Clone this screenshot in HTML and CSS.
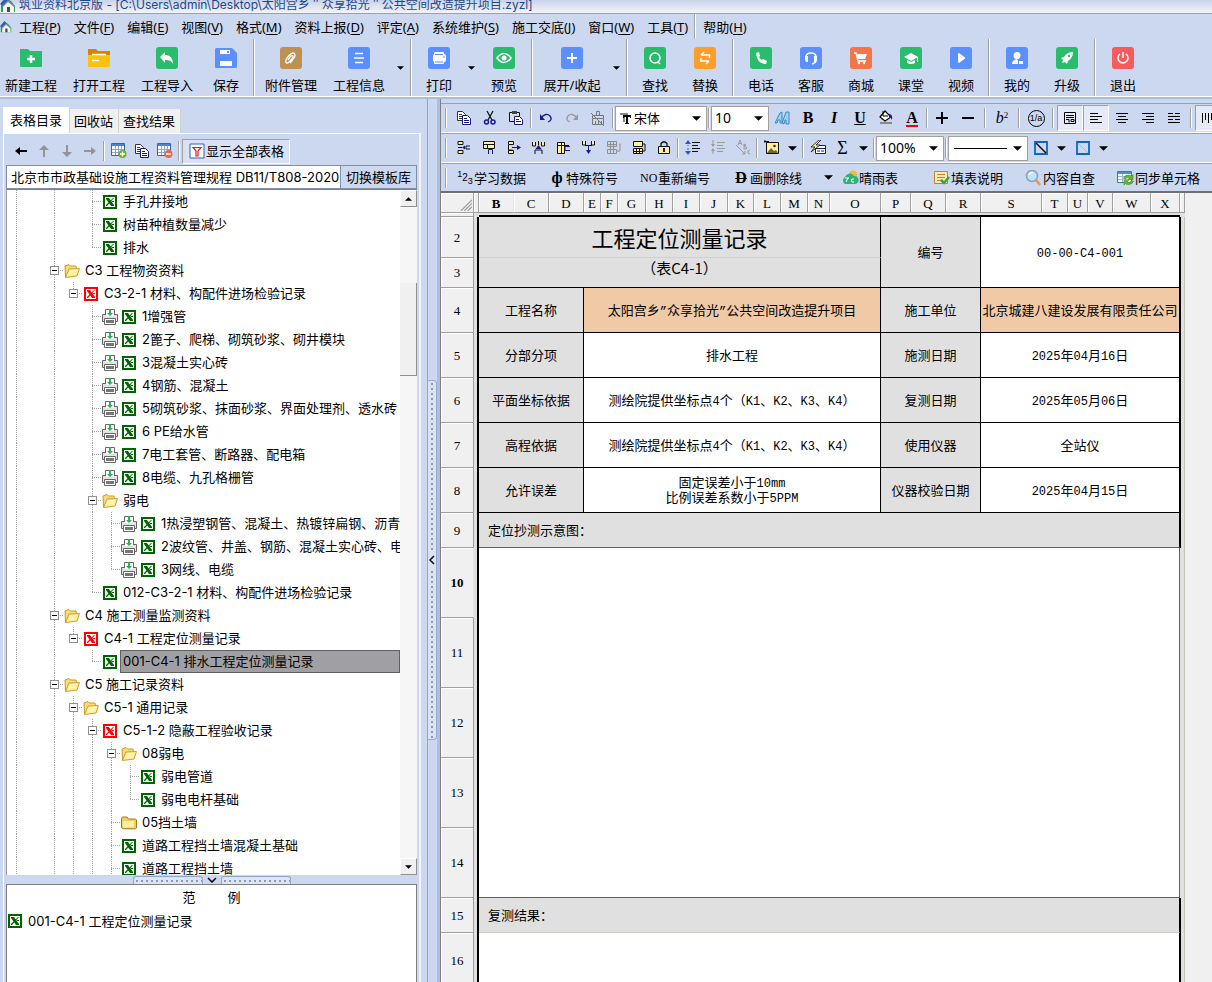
FILE: index.html
```html
<!DOCTYPE html>
<html lang="zh-CN">
<head>
<meta charset="utf-8">
<title>筑业资料北京版</title>
<link rel="stylesheet" href="styles.css">
</head>
<body>
<svg class="defs" aria-hidden="true">
  <symbol id="logo" viewBox="0 0 16 16"><path d="M1 8 7 2l4 2 4 5v6H1z" fill="#2f9b57"/><path d="M0 7 6 0l3 3-6 6z" fill="#2c5fb0"/><path d="M3 9l5-5 6 5v6H3z" fill="#f4f4ee"/><path d="M2 9l6-6 7 6-1 1-6-5-5 5z" fill="#7a8aa0"/><path d="M7 10h3v5H7z" fill="#4a4a4a"/></symbol>
  <symbol id="xls" viewBox="0 0 14 14"><path d="M0 0h14v14H0z" fill="currentColor"/><path d="M2 2h10v10H2z" fill="#fff"/><path d="M3 3h3l5 7v1H8L3 4z" fill="currentColor"/><path d="M10 3h1L4 11H3v-1z" fill="currentColor"/><path d="M9 6h2v1H9z" fill="currentColor"/></symbol>
  <symbol id="prn" viewBox="0 0 16 16"><path d="M3.500 5.500v-5h9v5" fill="#fff" stroke="#666"/><path d="M.5 5.500h15v7h-15z" fill="#e4e4e4" stroke="#666"/><path d="M2.500 9.500h11v6h-11z" fill="#fff" stroke="#666"/><path d="M4 11h8v3H4z" fill="#777"/><path d="M4 5h8v2H4z" fill="#fff"/><path d="M7 0h2v4h2L8 7 5 4h2z" fill="#2fae55"/></symbol>
  <symbol id="fo" viewBox="0 0 16 16"><path d="M1.500 14 1 3l4-1.500L6.500 3H12l.5 2.500" fill="#f7dc7a" stroke="#c99a2a"/><path d="M1.500 14.500 5 6l10.500-.5L13 13z" fill="#fff09a" stroke="#cf9f2c"/><path d="M6 8l7-.5M5 11l6-.5" stroke="#fffbd6"/></symbol>
  <symbol id="fc" viewBox="0 0 16 16"><path d="M.5 12.500v-9l1-1.500H6l1.500 2h7l1 1v8l-1 .8H2z" fill="#f2cf5c" stroke="#9b7a2e"/><path d="M2 6h11v6.500H2z" fill="#fff0a0"/></symbol>
  <symbol id="tbl" viewBox="0 0 16 16"><path d="M.5.5h13v12H.5z" fill="#fff" stroke="#2f66b3"/><path d="M1 1h12v2H1z" fill="#4d86cf"/><path d="M1 6.500h12M1 9.500h12M4.500 3v9M7.500 3v9M10.500 3v9" stroke="#8aa8cf"/></symbol>
  <symbol id="cp" viewBox="0 0 16 16"><path d="M1.500 1.500h5l3 3v6h-8z" fill="#fff" stroke="#333"/><path d="M3 4.500h3M3 6.500h4M3 8.500h4" stroke="#333"/><path d="M6.500 5.500h5l3 3v6h-8z" fill="#fff" stroke="#1a1a70"/><path d="M8 8.500h3M8 10.500h5M8 12.500h5" stroke="#1a1a70"/></symbol>
  <symbol id="down" viewBox="0 0 8 4"><path d="M0 0h8L4 4z" fill="#000"/></symbol>
</svg>

<header class="title"><svg class="s16"><use href="#logo"/></svg><span>筑业资料北京版 - [C:\Users\admin\Desktop\太阳宫乡＂众享拾光＂公共空间改造提升项目.zyzl]</span></header>

<nav class="menu">
  <svg class="logo2"><use href="#logo"/></svg>
  <button>工程(<u>P</u>)</button><button>文件(<u>F</u>)</button><button>编辑(<u>E</u>)</button><button>视图(<u>V</u>)</button><button>格式(<u>M</u>)</button><button>资料上报(<u>D</u>)</button><button>评定(<u>A</u>)</button><button>系统维护(<u>S</u>)</button><button>施工交底(<u>J</u>)</button><button>窗口(<u>W</u>)</button><button>工具(<u>T</u>)</button><span class="msep"></span><button>帮助(<u>H</u>)</button>
</nav>

<div class="tools">
  <button class="w4"><svg class="s22" viewBox="0 0 22 22"><path d="M0 2h8l2 2h12v15a1 1 0 0 1-1 1H1a1 1 0 0 1-1-1z" fill="#2abc6c"/><path d="M11 8v8M7 12h8" stroke="#fff" stroke-width="2.500"/></svg>新建工程</button>
  <button class="w4"><svg class="s22" viewBox="0 0 22 22"><path d="M0 2h8l2 2h12v5H0z" fill="#d98200"/><path d="M0 8h22v11a1 1 0 0 1-1 1H1a1 1 0 0 1-1-1z" fill="#fcc20c"/><path d="M4 7.500h14M4 13.500h7" stroke="#fff" stroke-width="1.500"/></svg>打开工程</button>
  <button class="w4"><svg class="s22" viewBox="0 0 22 22"><rect width="22" height="22" rx="3" fill="#2abc6c"/><path d="M4 10l5-5v3c5 0 8 3 8 9-1-3-4-4-8-4v3z" fill="#fff"/></svg>工程导入</button>
  <button class="w2"><svg class="s22" viewBox="0 0 22 22"><path d="M1 1h16l5 5v14a1 1 0 0 1-1 1H1a1 1 0 0 1-1-1V2z" fill="#5b8ffb"/><path d="M5 3h10v4H5zM5 14h12v5H5z" fill="#fff"/><path d="M12 4h2v2h-2z" fill="#5b8ffb"/></svg>保存</button>
  <span class="tsep"></span>
  <button class="w4"><svg class="s22" viewBox="0 0 22 22"><rect width="22" height="22" rx="3" fill="#bd9153"/><path d="M8 13c2-4 4-5 5-4s-2 4-4 6-4 1-3-2 5-7 7-7 3 2 1 5-3 4-4 5" fill="none" stroke="#fff" stroke-width="1.300"/></svg>附件管理</button>
  <button class="w4"><svg class="s22" viewBox="0 0 22 22"><rect width="22" height="22" rx="3" fill="#5b8ffb"/><path d="M7 6.500h8M6 11h10M7 15.500h8" stroke="#fff" stroke-width="1.300"/></svg>工程信息</button>
  <button class="arr" aria-label="工程信息选项"><svg><use href="#down"/></svg></button>
  <span class="tsep"></span>
  <button class="w2"><svg class="s22" viewBox="0 0 22 22"><rect width="22" height="22" rx="3" fill="#5b8ffb"/><rect x="6" y="5" width="10" height="12" rx="1" fill="#fff"/><rect x="5" y="7" width="13" height="8" rx="2" fill="#fff"/><path d="M7 7.500h8M7 15h8M15 10h2" stroke="#5b8ffb"/></svg>打印</button>
  <button class="arr" aria-label="打印选项"><svg><use href="#down"/></svg></button>
  <button class="w2"><svg class="s22" viewBox="0 0 22 22"><rect width="22" height="22" rx="3" fill="#2abc6c"/><path d="M4 11q7-9 14 0-7 9-14 0z" fill="none" stroke="#fff" stroke-width="1.600"/><circle cx="11" cy="11" r="2.500" fill="#fff"/></svg>预览</button>
  <span class="tsep"></span>
  <button class="w5"><svg class="s22" viewBox="0 0 22 22"><rect width="22" height="22" rx="3" fill="#5b8ffb"/><path d="M11 6v10M6 11h10" stroke="#fff" stroke-width="1.800"/></svg>展开/收起</button>
  <button class="arr" aria-label="展开选项"><svg><use href="#down"/></svg></button>
  <span class="tsep"></span>
  <button class="w2"><svg class="s22" viewBox="0 0 22 22"><rect width="22" height="22" rx="3" fill="#2abc6c"/><circle cx="11" cy="11" r="5" fill="none" stroke="#fff" stroke-width="1.500"/><path d="M14 15l2 2" stroke="#fff" stroke-width="1.500"/></svg>查找</button>
  <button class="w2"><svg class="s22" viewBox="0 0 22 22"><rect width="22" height="22" rx="3" fill="#fd9e2b"/><path d="M16 8H7M10 5L7 8M6 14h9M12 17l3-3M7 14v-3M15.500 8v3" fill="none" stroke="#fff" stroke-width="1.600"/></svg>替换</button>
  <span class="tsep"></span>
  <button class="w2"><svg class="s22" viewBox="0 0 22 22"><rect width="22" height="22" rx="3" fill="#2abc6c"/><path d="M6 6l3-1 1 4-1 1q1 2 3 3l1-1 4 2-1 3Q7 17 6 6z" fill="#fff"/></svg>电话</button>
  <button class="w2"><svg class="s22" viewBox="0 0 22 22"><rect width="22" height="22" rx="3" fill="#5b8ffb"/><path d="M6 11v-1q0-4 5-4t5 4v3q0 3-4 4" fill="none" stroke="#fff" stroke-width="1.500"/><path d="M5 9h3v6H6l-1-2zM17 9h-3v6h2l1-2z" fill="#fff"/></svg>客服</button>
  <button class="w2"><svg class="s22" viewBox="0 0 22 22"><rect width="22" height="22" rx="3" fill="#f2764a"/><path d="M4 6h2l2 8h8" fill="none" stroke="#fff" stroke-width="1.400"/><path d="M7 7h10l-2 5H8z" fill="#fff"/><circle cx="9" cy="16" r="1.200" fill="#fff"/><circle cx="14" cy="16" r="1.200" fill="#fff"/></svg>商城</button>
  <button class="w2"><svg class="s22" viewBox="0 0 22 22"><rect width="22" height="22" rx="3" fill="#2abc6c"/><path d="M4 10l7-4 7 4-7 4z" fill="#fff"/><path d="M7 13v3q4 2 8 0v-3l-4 2z" fill="#fff"/><path d="M17.500 10v5" stroke="#fff"/></svg>课堂</button>
  <button class="w2"><svg class="s22" viewBox="0 0 22 22"><rect width="22" height="22" rx="3" fill="#5b8ffb"/><path d="M8 7q0-1 1-1l6 4.500q.5.500 0 1l-6 4.500q-1 0-1-1z" fill="#fff"/></svg>视频</button>
  <span class="tsep"></span>
  <button class="w2"><svg class="s22" viewBox="0 0 22 22"><rect width="22" height="22" rx="3" fill="#5b8ffb"/><circle cx="11" cy="8.500" r="3.500" fill="#fff"/><path d="M6 17q0-4 5-5l1 2v3zM13 14h4v3h-4z" fill="#fff"/></svg>我的</button>
  <button class="w2"><svg class="s22" viewBox="0 0 22 22"><rect width="22" height="22" rx="3" fill="#2abc6c"/><path d="M17 5q-6 0-9 5l-3 1 2 2-1 3 3-1 2 2 1-3q5-3 5-9z" fill="#fff"/><circle cx="13" cy="9" r="1.200" fill="#2abc6c"/></svg>升级</button>
  <span class="tsep"></span>
  <button class="w2"><svg class="s22" viewBox="0 0 22 22"><rect width="22" height="22" rx="3" fill="#f65c5e"/><path d="M8 7a5 5 0 1 0 6 0M11 5v6" fill="none" stroke="#fff" stroke-width="1.500"/></svg>退出</button>
</div>

<div class="work">
<aside class="left">
  <div class="tabs" role="tablist"><button class="on" role="tab">表格目录</button><button role="tab">回收站</button><button role="tab">查找结果</button></div>
  <div class="pane">
    <div class="ltools">
      <button aria-label="后退"><svg class="s16" viewBox="0 0 16 16"><path d="M2 8l5-4v3h7v2H7v3z" fill="#000"/></svg></button>
      <button aria-label="上移"><svg class="s16" viewBox="0 0 16 16"><path d="M8 2l5 5H9v7H7V7H3z" fill="#949494"/></svg></button>
      <button aria-label="下移"><svg class="s16" viewBox="0 0 16 16"><path d="M8 14l5-5H9V2H7v7H3z" fill="#949494"/></svg></button>
      <button aria-label="前进"><svg class="s16" viewBox="0 0 16 16"><path d="M14 8L9 4v3H2v2h7v3z" fill="#949494"/></svg></button>
      <span class="sep"></span>
      <button aria-label="添加表格"><svg class="s16" viewBox="0 0 16 16"><use href="#tbl"/><circle cx="11.500" cy="11" r="4" fill="#6fae1c"/><path d="M9 11h5M11.500 8.500v5" stroke="#fff" stroke-width="1.500"/></svg></button>
      <button aria-label="复制表格"><svg class="s16"><use href="#cp"/></svg></button>
      <button aria-label="删除表格"><svg class="s16" viewBox="0 0 16 16"><use href="#tbl"/><circle cx="11.500" cy="11" r="4" fill="#f0654a"/><path d="M9 11h5" stroke="#fff" stroke-width="1.500"/></svg></button>
      <span class="sep"></span>
      <button class="showall"><svg class="s16" viewBox="0 0 16 16"><path d="M1 1h14v14H1z" fill="#fff" stroke="#2f62b5"/><path d="M4 4.500h8L9 8v5H7V8z" fill="#fff" stroke="#e02020" stroke-width="1.200"/></svg>显示全部表格</button>
    </div>
    <div class="lib"><input aria-label="模板库" value="北京市市政基础设施工程资料管理规程 DB11/T808-2020"><button>切换模板库</button></div>
    <div class="treebox">
      <ul class="tree">
        <li><i class="v"></i><i></i><i class="v"></i><i></i><i class="t"></i><svg class="g"><use href="#xls"/></svg><span>手孔井接地</span></li>
        <li><i class="v"></i><i></i><i class="v"></i><i></i><i class="t"></i><svg class="g"><use href="#xls"/></svg><span>树苗种植数量减少</span></li>
        <li><i class="v"></i><i></i><i class="v"></i><i></i><i class="l"></i><svg class="g"><use href="#xls"/></svg><span>排水</span></li>
        <li><i class="v"></i><i></i><i class="t"><button aria-label="折叠"></button></i><svg class="f"><use href="#fo"/></svg><span>C3 工程物资资料</span></li>
        <li><i class="v"></i><i></i><i class="v"></i><i class="l"><button aria-label="折叠"></button></i><svg class="r"><use href="#xls"/></svg><span>C3-2-1 材料、构配件进场检验记录</span></li>
        <li><i class="v"></i><i></i><i class="v"></i><i></i><i class="t"></i><svg class="f"><use href="#prn"/></svg><svg class="g"><use href="#xls"/></svg><span>1增强管</span></li>
        <li><i class="v"></i><i></i><i class="v"></i><i></i><i class="t"></i><svg class="f"><use href="#prn"/></svg><svg class="g"><use href="#xls"/></svg><span>2篦子、爬梯、砌筑砂浆、砌井模块</span></li>
        <li><i class="v"></i><i></i><i class="v"></i><i></i><i class="t"></i><svg class="f"><use href="#prn"/></svg><svg class="g"><use href="#xls"/></svg><span>3混凝土实心砖</span></li>
        <li><i class="v"></i><i></i><i class="v"></i><i></i><i class="t"></i><svg class="f"><use href="#prn"/></svg><svg class="g"><use href="#xls"/></svg><span>4钢筋、混凝土</span></li>
        <li><i class="v"></i><i></i><i class="v"></i><i></i><i class="t"></i><svg class="f"><use href="#prn"/></svg><svg class="g"><use href="#xls"/></svg><span>5砌筑砂浆、抹面砂浆、界面处理剂、透水砖</span></li>
        <li><i class="v"></i><i></i><i class="v"></i><i></i><i class="t"></i><svg class="f"><use href="#prn"/></svg><svg class="g"><use href="#xls"/></svg><span>6 PE给水管</span></li>
        <li><i class="v"></i><i></i><i class="v"></i><i></i><i class="t"></i><svg class="f"><use href="#prn"/></svg><svg class="g"><use href="#xls"/></svg><span>7电工套管、断路器、配电箱</span></li>
        <li><i class="v"></i><i></i><i class="v"></i><i></i><i class="t"></i><svg class="f"><use href="#prn"/></svg><svg class="g"><use href="#xls"/></svg><span>8电缆、九孔格栅管</span></li>
        <li><i class="v"></i><i></i><i class="v"></i><i></i><i class="t"><button aria-label="折叠"></button></i><svg class="f"><use href="#fo"/></svg><span>弱电</span></li>
        <li><i class="v"></i><i></i><i class="v"></i><i></i><i class="v"></i><i class="t"></i><svg class="f"><use href="#prn"/></svg><svg class="g"><use href="#xls"/></svg><span>1热浸塑钢管、混凝土、热镀锌扁钢、沥青</span></li>
        <li><i class="v"></i><i></i><i class="v"></i><i></i><i class="v"></i><i class="t"></i><svg class="f"><use href="#prn"/></svg><svg class="g"><use href="#xls"/></svg><span>2波纹管、井盖、钢筋、混凝土实心砖、电</span></li>
        <li><i class="v"></i><i></i><i class="v"></i><i></i><i class="v"></i><i class="l"></i><svg class="f"><use href="#prn"/></svg><svg class="g"><use href="#xls"/></svg><span>3网线、电缆</span></li>
        <li><i class="v"></i><i></i><i class="v"></i><i></i><i class="l"></i><svg class="g"><use href="#xls"/></svg><span>012-C3-2-1 材料、构配件进场检验记录</span></li>
        <li><i class="v"></i><i></i><i class="t"><button aria-label="折叠"></button></i><svg class="f"><use href="#fo"/></svg><span>C4 施工测量监测资料</span></li>
        <li><i class="v"></i><i></i><i class="v"></i><i class="l"><button aria-label="折叠"></button></i><svg class="r"><use href="#xls"/></svg><span>C4-1 工程定位测量记录</span></li>
        <li><i class="v"></i><i></i><i class="v"></i><i></i><i class="l"></i><svg class="g"><use href="#xls"/></svg><span class="sel">001-C4-1 排水工程定位测量记录</span></li>
        <li><i class="v"></i><i></i><i class="t"><button aria-label="折叠"></button></i><svg class="f"><use href="#fo"/></svg><span>C5 施工记录资料</span></li>
        <li><i class="v"></i><i></i><i class="v"></i><i class="t"><button aria-label="折叠"></button></i><svg class="f"><use href="#fo"/></svg><span>C5-1 通用记录</span></li>
        <li><i class="v"></i><i></i><i class="v"></i><i class="v"></i><i class="t"><button aria-label="折叠"></button></i><svg class="r"><use href="#xls"/></svg><span>C5-1-2 隐蔽工程验收记录</span></li>
        <li><i class="v"></i><i></i><i class="v"></i><i class="v"></i><i class="v"></i><i class="t"><button aria-label="折叠"></button></i><svg class="f"><use href="#fo"/></svg><span>08弱电</span></li>
        <li><i class="v"></i><i></i><i class="v"></i><i class="v"></i><i class="v"></i><i class="v"></i><i class="t"></i><svg class="g"><use href="#xls"/></svg><span>弱电管道</span></li>
        <li><i class="v"></i><i></i><i class="v"></i><i class="v"></i><i class="v"></i><i class="v"></i><i class="l"></i><svg class="g"><use href="#xls"/></svg><span>弱电电杆基础</span></li>
        <li><i class="v"></i><i></i><i class="v"></i><i class="v"></i><i class="v"></i><i class="t"></i><svg class="f"><use href="#fc"/></svg><span>05挡土墙</span></li>
        <li><i class="v"></i><i></i><i class="v"></i><i class="v"></i><i class="v"></i><i class="t"></i><svg class="g"><use href="#xls"/></svg><span>道路工程挡土墙混凝土基础</span></li>
        <li><i class="v"></i><i></i><i class="v"></i><i class="v"></i><i class="v"></i><i class="t"></i><svg class="g"><use href="#xls"/></svg><span>道路工程挡土墙</span></li>
      </ul>
      <div class="vscroll"><button class="up" aria-label="向上滚动"><svg><use href="#down"/></svg></button><div class="thumb"></div><button aria-label="向下滚动"><svg><use href="#down"/></svg></button></div>
    </div>
    <div class="hsplit"><span class="grip"></span><svg viewBox="0 0 10 6"><path d="M1 1l4 4 4-4" fill="none" stroke="#000" stroke-width="1.500"/></svg><span class="grip"></span></div>
    <div class="examples">
      <div class="exhead"><span>范</span><span>例</span></div>
      <div class="exrow"><svg class="g"><use href="#xls"/></svg><span>001-C4-1 工程定位测量记录</span></div>
    </div>
  </div>
</aside>

<div class="vsplit"><div class="handle"><span></span><svg viewBox="0 0 6 10"><path d="M5 1L1 5l4 4" fill="none" stroke="#000" stroke-width="1.500"/></svg><span></span></div></div>

<main class="right">
  <div class="bar b1">
    <span class="sep"></span>
    <button aria-label="复制"><svg class="s16"><use href="#cp"/></svg></button>
    <button aria-label="剪切"><svg class="s16" viewBox="0 0 16 16"><path d="M5 1l5 9M11 1l-5 9" stroke="#111" stroke-width="1.300"/><circle cx="4.500" cy="12" r="2" fill="none" stroke="#1a1a90" stroke-width="1.500"/><circle cx="11" cy="12" r="2" fill="none" stroke="#1a1a90" stroke-width="1.500"/></svg></button>
    <button aria-label="粘贴"><svg class="s16" viewBox="0 0 16 16"><path d="M1.500 2.500h10v9h-10z" fill="#d9dfe8" stroke="#111"/><path d="M4 1h5v3H4z" fill="#444"/><path d="M6.500 6.500h5l3 3v5h-8z" fill="#fff" stroke="#1a1a70"/><path d="M8 9.500h3M8 11.500h5" stroke="#1a1a70"/></svg></button>
    <span class="sep"></span>
    <button aria-label="撤销"><svg class="s16" viewBox="0 0 16 16"><path d="M3 8q5-6 9-2 3 4-2 6" fill="none" stroke="#1a1a80" stroke-width="1.300"/><path d="M2 4v6h5z" fill="#1a1a80"/></svg></button>
    <button aria-label="重做"><svg class="s16" viewBox="0 0 16 16"><path d="M13 8Q8 2 4 6q-3 4 2 6" fill="none" stroke="#999" stroke-width="1.300"/><path d="M14 4v6H9z" fill="#999"/></svg></button>
    <button aria-label="格式刷"><svg class="s16" viewBox="0 0 16 16"><path d="M6.500 5V1.500h3V5M2.500 5.500h11v3h-11zM2.500 9v5.500h11V9M5.500 11v3M8.500 11v3M11.500 11v3M1 3l13 13" fill="none" stroke="#777"/></svg></button>
    <span class="sep"></span>
    <label class="combo font"><svg viewBox="0 0 12 12"><path d="M1 1h8v2H6v7H4V3H1z" fill="#888"/><path d="M4 3h8v3h-1V5H9v6h1v1H6v-1h1V5H5v1H4z" fill="#000"/></svg><select aria-label="字体"><option>宋体</option></select><svg class="dn"><use href="#down"/></svg></label>
    <span class="sep"></span>
    <label class="combo size"><select aria-label="字号"><option>10</option></select><svg class="dn"><use href="#down"/></svg></label>
    <button aria-label="字体设置"><svg class="s16" viewBox="0 0 16 16"><path d="M1 13L6 3l2-1v11H6v-3H4l-1 3zM8 13l4-11h3v12h-3v-4h-1l-1 4z" fill="#9fd0f0" stroke="#3d88bf"/></svg></button>
    <button class="ser b">B</button><button class="ser b i">I</button><button class="ser b"><u>U</u></button>
    <button aria-label="填充颜色"><svg class="s16" viewBox="0 0 16 16"><path d="M7 1l6 6-6 4-5-4z" fill="#fff" stroke="#000" stroke-width="1.200"/><path d="M11 4q4 0 3 6-1-3-3-3z" fill="#1a1a80"/><path d="M5 1v5h5" fill="none" stroke="#000"/><path d="M2 12h12v2H2z" fill="#8a8a8a"/></svg></button>
    <button class="ser b red">A</button>
    <span class="sep"></span>
    <button aria-label="增大"><svg class="s16" viewBox="0 0 16 16"><path d="M8 2v12M2 8h12" stroke="#000" stroke-width="2"/></svg></button>
    <button aria-label="减小"><svg class="s16" viewBox="0 0 16 16"><path d="M2 8h12" stroke="#000" stroke-width="2"/></svg></button>
    <span class="sep w8"></span>
    <button class="ser sup"><em>b</em><sup>2</sup></button>
    <span class="sep w8"></span>
    <button class="circ"><span>1/a</span></button>
    <span class="sep w8"></span>
    <button class="press" aria-label="自动换行"><svg class="s16" viewBox="0 0 16 16"><path d="M2.500 2.500h11v11h-11zM4 5.500h8M4 7.500h8M4 9.500h3v3M9 9.500h3v2H9z" fill="none" stroke="#000"/></svg></button>
    <button class="press" aria-label="左对齐"><svg class="s16" viewBox="0 0 16 16"><path d="M2 3.500h8M2 6.500h12M2 9.500h8M2 12.500h12" stroke="#000"/></svg></button>
    <button aria-label="居中"><svg class="s16" viewBox="0 0 16 16"><path d="M2 3.500h12M4 6.500h8M2 9.500h12M4 12.500h8" stroke="#000"/></svg></button>
    <button aria-label="右对齐"><svg class="s16" viewBox="0 0 16 16"><path d="M2 3.500h12M6 6.500h8M2 9.500h12M6 12.500h8" stroke="#000"/></svg></button>
    <button aria-label="分散对齐"><svg class="s16" viewBox="0 0 16 16"><path d="M2 3.500h5M9 3.500h5M2 6.500h12M2 9.500h5M9 9.500h5M2 12.500h12" stroke="#000"/></svg></button>
    <span class="sep w8"></span>
    <button class="press" aria-label="竖排"><svg class="s16" viewBox="0 0 16 16"><path d="M2.500 3v10M5.500 3v7M8.500 3v10M11.500 3v7" stroke="#000"/></svg></button>
  </div>
  <div class="bar b2">
    <span class="sep"></span>
    <button aria-label="插入行"><svg class="s16" viewBox="0 0 16 16"><path d="M2 1.500h5v3H2zM2 10.500h5v3H2z" fill="#ffef9a" stroke="#111"/><path d="M2 7.500h4M14 6h-4v3h4" stroke="#111" fill="none"/><path d="M6 7.500l3-2v4z" fill="#1a1a80"/></svg></button>
    <button aria-label="插入单元格"><svg class="s16" viewBox="0 0 16 16"><path d="M2.500 1.500h11v7h-11z" fill="#ffef9a" stroke="#111"/><path d="M2 4.500h12M6.500 4v4" stroke="#111"/><path d="M7.500 14V9.500h4V14" fill="#ccd8f0" stroke="#1a1a80"/></svg></button>
    <button aria-label="删除行"><svg class="s16" viewBox="0 0 16 16"><path d="M2.500 1.500h5v3h-5zM2.500 10.500h5v3h-5zM2.500 5v5h4" fill="#ffef9a" stroke="#111"/><path d="M6 7.500h6" stroke="#1a1a80"/><path d="M11 5l4 2.500-4 2.500z" fill="#1a1a80"/></svg></button>
    <button aria-label="插入列"><svg class="s16" viewBox="0 0 16 16"><path d="M1.500 2v4h3V2M10.500 2v4h3V2M7.500 1v4" fill="#ffef9a" stroke="#111"/><path d="M4 14V10h7v4" fill="none" stroke="#111"/><path d="M7.500 5l3 4h-6z" fill="#1a1a80"/></svg></button>
    <button aria-label="插入列单元格"><svg class="s16" viewBox="0 0 16 16"><path d="M1.500 2.500h7v11h-7z" fill="#ffef9a" stroke="#111"/><path d="M1 5.500h12M5.500 3v10" stroke="#111"/><path d="M14 6.500H9v4h5" fill="none" stroke="#1a1a80"/></svg></button>
    <button aria-label="删除列"><svg class="s16" viewBox="0 0 16 16"><path d="M1.500 1v4h3V1M10.500 1v4h3V1M4 5.500h7" fill="#ffef9a" stroke="#111"/><path d="M7.500 5v6" stroke="#1a1a80"/><path d="M5 10h5l-2.500 4z" fill="#1a1a80"/></svg></button>
    <button aria-label="拆分单元格"><svg class="s16" viewBox="0 0 16 16"><path d="M1.500 1.500h9v5h-9zM1.500 9.500h9v4h-9zM4.500 2v11M7.500 2v11M1 4.500h9M13 4h1v7h-3" fill="none" stroke="#8f8f8f"/></svg></button>
    <button aria-label="合并单元格"><svg class="s16" viewBox="0 0 16 16"><path d="M2.500 1.500h9v5h-9zM2.500 8.500h9v5h-9z" fill="#ffef9a" stroke="#111"/><path d="M5.500 9v5M8.500 9v5M2 11.500h9M12 4h2v7h-2" fill="none" stroke="#111"/></svg></button>
    <button aria-label="锁定"><svg class="s16" viewBox="0 0 16 16"><path d="M5 7V3.500Q8 0 11 3.500V7" fill="none" stroke="#111" stroke-width="1.300"/><path d="M2.500 6.500h11v7h-11z" fill="#ffef9a" stroke="#111"/><path d="M7 8h2v4H7z" fill="#1a1a80"/></svg></button>
    <span class="sep"></span>
    <button aria-label="行距"><svg class="s16" viewBox="0 0 16 16"><path d="M7 2.500h8M7 5.500h6M7 8.500h8M7 11.500h6" stroke="#111"/><path d="M3 2v4M3 8v5" stroke="#2f55c0" stroke-dasharray="2 1"/><path d="M0 4l3-4 3 4zM0 11h6l-3 4z" fill="#2f55c0"/></svg></button>
    <button aria-label="缩小行距"><svg class="s16" viewBox="0 0 16 16"><path d="M7 2.500h8M7 5.500h6M7 8.500h8M7 11.500h6M3 0v4M3 10v4" stroke="#999"/><path d="M1 4h4L3 7zM1 11h4L3 8z" fill="#999"/></svg></button>
    <button aria-label="斜排文字"><svg class="s16" viewBox="0 0 16 16"><path d="M1 5l9 9M10 11v3H7M3 5l2-5 2 5M4 3.500h2M9 4v5h2l1-1-3-2 2-1-2-1M15 10l-2 1v2l2 1" fill="none" stroke="#999"/></svg></button>
    <span class="sep"></span>
    <button aria-label="插入图片"><svg class="s16" viewBox="0 0 16 16"><path d="M1 0v3M0 1.500h5" stroke="#111"/><path d="M2.500 2.500h12v11h-12z" fill="#ffef9a" stroke="#111"/><path d="M3 13l4-5 3 3 2-1 2 3z" fill="#6a6a30"/><circle cx="10.500" cy="6" r="1.300" fill="#333"/></svg></button>
    <button class="arr2" aria-label="图片选项"><svg class="dn"><use href="#down"/></svg></button>
    <span class="sep"></span>
    <button aria-label="编辑表单"><svg class="s16" viewBox="0 0 16 16"><path d="M5.500 5.500h10v8h-10z" fill="#fff" stroke="#1a1a70"/><path d="M6 8.500h9M7 11h3M11 11h3" stroke="#1a1a70"/><path d="M9 0L1 7h4l-4 5 9-7H6l5-5z" fill="#ffef9a" stroke="#111" stroke-width=".8"/></svg></button>
    <button class="ser sum">Σ</button>
    <button class="arr2" aria-label="求和选项"><svg class="dn"><use href="#down"/></svg></button>
    <span class="sep"></span>
    <label class="combo zoom"><select aria-label="缩放"><option>100%</option></select><svg class="dn"><use href="#down"/></svg></label>
    <span class="sep"></span>
    <label class="combo line"><span></span><svg class="dn"><use href="#down"/></svg><select aria-label="线型"><option></option></select></label>
    <button aria-label="边框"><svg class="s16" viewBox="0 0 16 16"><path d="M2 2h12v12H2z" fill="none" stroke="#0b66c8" stroke-width="1.800"/><path d="M3 3l10 10" stroke="#111" stroke-width="1.500"/></svg></button>
    <button class="arr2" aria-label="边框选项"><svg class="dn"><use href="#down"/></svg></button>
    <button aria-label="清除边框"><svg class="s16" viewBox="0 0 16 16"><path d="M2 2h12v12H2z" fill="none" stroke="#0b66c8" stroke-width="1.800"/><path d="M3 3l10 10" stroke="#b5bccb"/></svg></button>
    <button class="arr2" aria-label="清除边框选项"><svg class="dn"><use href="#down"/></svg></button>
  </div>
  <div class="bar b3">
    <span class="sep"></span>
    <button><span class="ic dig"><sup>1</sup>2<sub>3</sub></span>学习数据</button>
    <button><span class="ic ser b">ф</span>特殊符号</button>
    <button><span class="ic no">NO</span>重新编号</button>
    <button><span class="ic ser b"><s>D</s></span>画删除线</button>
    <button class="arr3" aria-label="画删除线选项"><svg class="dn"><use href="#down"/></svg></button>
    <button><svg class="ic" viewBox="0 0 18 16"><circle cx="12" cy="5" r="4.500" fill="#f9b934"/><path d="M4 14a4 4 0 0 1 0-7 5 5 0 0 1 9-1 4 4 0 0 1 1 8z" fill="#2fb27a"/><path d="M4 8h4M7 8l-2 4M13 9h-2q-1 1 0 3h2" fill="none" stroke="#fff"/></svg>晴雨表</button>
    <button><svg class="ic" viewBox="0 0 18 16"><path d="M1.500 1.500h13v12h-13z" fill="#fbe9b0" stroke="#b98a35"/><path d="M4 4.500h8M4 7.500h8M4 10.500h4" stroke="#c08a2e"/><path d="M8 10l3 3 5-6" fill="none" stroke="#3aa63a" stroke-width="2.500"/></svg>填表说明</button>
    <button><svg class="ic" viewBox="0 0 18 16"><circle cx="7" cy="6" r="5.500" fill="#bfe3fa" stroke="#8aa2b8" stroke-width="1.500"/><path d="M4 5q1-3 4-2" fill="none" stroke="#fff" stroke-width="1.500"/><path d="M11 10l4 5" stroke="#e09a50" stroke-width="2.500"/></svg>内容自查</button>
    <button class="wide"><svg class="ic" viewBox="0 0 18 16"><path d="M.5 1.500h14v11H.5z" fill="#fff" stroke="#3a79b8"/><path d="M1 2h13v2H1z" fill="#4b92d0"/><path d="M1 6.500h13M1 9.500h13M5.500 4v8" stroke="#9ab8d8"/><path d="M6.500 8.500q1-3.500 5-3.500 2 0 3 1l1.500-1.500v5h-5l1.500-1.500q-3-1-4 1zM16.500 11q-1 3.500-5 3.500-2 0-3-1L7 15v-4.500h4.500L10 12q3 1 4-1z" fill="#6cb52c" stroke="#3d8a1d" stroke-width=".6"/></svg>同步单元格</button>
  </div>
  <div class="sheet">
    <table>
      <colgroup><col class="c33"><col class="c5"><col class="c35"><col class="c35"><col class="c35"><col class="c17"><col class="c17"><col class="c28"><col class="c27"><col class="c27"><col class="c28"><col class="c26"><col class="c27"><col class="c27"><col class="c22"><col class="c51"><col class="c30"><col class="c35"><col class="c35"><col class="c61"><col class="c26"><col class="c20"><col class="c25"><col class="c38"><col class="c29"><col class="c5"></colgroup>
      <thead><tr><th class="corner"><svg viewBox="0 0 14 14"><path d="M1 14L14 1M5 14l9-9M9 14l5-5" stroke="#999" stroke-width="1.300"/></svg></th><th></th><th class="cur">B</th><th>C</th><th>D</th><th>E</th><th>F</th><th>G</th><th>H</th><th>I</th><th>J</th><th>K</th><th>L</th><th>M</th><th>N</th><th>O</th><th>P</th><th>Q</th><th>R</th><th>S</th><th>T</th><th>U</th><th>V</th><th>W</th><th>X</th><th></th></tr></thead>
      <tbody>
        <tr class="h4"><th></th><td class="ma"></td><td class="top" colspan="23"></td><td class="ma"></td></tr>
        <tr class="h41"><th>2</th><td class="ml"></td><td class="lab h1" colspan="14">工程定位测量记录</td><td class="lab" colspan="3" rowspan="2">编号</td><td colspan="6" rowspan="2"><span class="n">00-00-C4-001</span></td><td class="mr"></td></tr>
        <tr class="h30"><th>3</th><td class="ml"></td><td class="lab h2" colspan="14">（表C4-1）</td><td class="mr"></td></tr>
        <tr class="h45"><th>4</th><td class="ml"></td><td class="lab" colspan="3">工程名称</td><td class="o" colspan="11">太阳宫乡<span class="n">”</span>众享拾光<span class="n">”</span>公共空间改造提升项目</td><td class="lab" colspan="3">施工单位</td><td class="o" colspan="6">北京城建八建设发展有限责任公司</td><td class="mr"></td></tr>
        <tr class="h45"><th>5</th><td class="ml"></td><td class="lab" colspan="3">分部分项</td><td colspan="11">排水工程</td><td class="lab" colspan="3">施测日期</td><td colspan="6"><span class="n">2025</span>年<span class="n">04</span>月<span class="n">16</span>日</td><td class="mr"></td></tr>
        <tr class="h45"><th>6</th><td class="ml"></td><td class="lab" colspan="3">平面坐标依据</td><td colspan="11">测绘院提供坐标点<span class="n">4</span>个（<span class="n">K1</span>、<span class="n">K2</span>、<span class="n">K3</span>、<span class="n">K4</span>）</td><td class="lab" colspan="3">复测日期</td><td colspan="6"><span class="n">2025</span>年<span class="n">05</span>月<span class="n">06</span>日</td><td class="mr"></td></tr>
        <tr class="h45"><th>7</th><td class="ml"></td><td class="lab" colspan="3">高程依据</td><td colspan="11">测绘院提供坐标点<span class="n">4</span>个（<span class="n">K1</span>、<span class="n">K2</span>、<span class="n">K3</span>、<span class="n">K4</span>）</td><td class="lab" colspan="3">使用仪器</td><td colspan="6">全站仪</td><td class="mr"></td></tr>
        <tr class="h45"><th>8</th><td class="ml"></td><td class="lab" colspan="3">允许误差</td><td colspan="11">固定误差小于<span class="n">10mm</span><br>比例误差系数小于<span class="n">5PPM</span></td><td class="lab" colspan="3">仪器校验日期</td><td colspan="6"><span class="n">2025</span>年<span class="n">04</span>月<span class="n">15</span>日</td><td class="mr"></td></tr>
        <tr class="h35"><th>9</th><td class="ml"></td><td class="lab left1" colspan="23">定位抄测示意图：</td><td class="mr"></td></tr>
        <tr class="h70"><th class="cur">10</th><td class="ml"></td><td class="blank" colspan="23" rowspan="5"></td><td class="mr thin"></td></tr>
        <tr class="h70"><th>11</th><td class="ml"></td><td class="mr thin"></td></tr>
        <tr class="h70"><th>12</th><td class="ml"></td><td class="mr thin"></td></tr>
        <tr class="h70"><th>13</th><td class="ml"></td><td class="mr thin"></td></tr>
        <tr class="h70"><th>14</th><td class="ml"></td><td class="mr thin"></td></tr>
        <tr class="h35"><th>15</th><td class="ml"></td><td class="lab left1 soft" colspan="23">复测结果：</td><td class="mr"></td></tr>
        <tr class="h56"><th>16</th><td class="ml"></td><td colspan="23"></td><td class="mr"></td></tr>
      </tbody>
    </table>
  </div>
</main>
</div>
</body>
</html>
```
FILE: styles.css
```css
* { box-sizing: border-box; }
html, body { height: 100%; }
body { margin: 0; overflow: hidden; display: flex; flex-direction: column; background: #ccd8f0; color: #000; font: 13px/18px "Noto Sans", "Noto Sans CJK SC", sans-serif; }
button { border: 0; background: none; padding: 0; margin: 0; font: inherit; color: inherit; white-space: nowrap; flex: none; }
svg { flex: none; display: block; }
.defs { position: absolute; width: 0; height: 0; }
.s16 { width: 16px; height: 16px; }
.s22 { width: 22px; height: 22px; }

.title { height: 14px; flex: none; overflow: hidden; display: flex; align-items: flex-end; gap: 3px; background: linear-gradient(#c8d3ea, #f4f4f8); border-bottom: 1px solid #a0a0a0; color: #1f4788; font: 12px/17px Inter, "Noto Sans CJK SC", sans-serif; white-space: nowrap; }
.menu { height: 25px; flex: none; display: flex; align-items: center; }
.menu .logo2 { width: 12px; height: 16px; }
.menu button { padding: 0 6px 0 7px; }
.menu u { text-underline-offset: 2px; }
.msep { width: 2px; align-self: stretch; background: #a0a0a0; border-right: 1px solid #fff; margin: 0; }

.tools { height: 58px; flex: none; display: flex; margin-left: -3px; border-bottom: 1px solid #fff; }
.tools button { display: flex; flex-direction: column; align-items: center; gap: 7px; padding-top: 8px; }
.w2 { width: 50px; }
.w4 { width: 68px; }
.w5 { width: 74px; }
.tools .arr { width: 15px; justify-content: center; padding: 0; }
.arr svg { width: 7px; height: 4px; }
.tsep { width: 2px; margin: 0 2px; background: #a0a0a0; border-right: 1px solid #fff; }

.work { flex: 1; min-height: 0; display: flex; border-top: 2px solid #a9bcdc; }
.left { width: 428px; flex: none; padding: 8px 6px 0 3px; border-right: 1px solid #8fa6cd; display: flex; flex-direction: column; }
.tabs { display: flex; align-items: flex-end; height: 26px; }
.tabs button { height: 24px; padding: 0 5px 0 4px; background: #f0f0f0; border-right: 1px solid #d0d0d0; }
.tabs .on { height: 26px; padding: 0 7px; background: #fff; }
.pane { flex: 1; min-height: 0; display: flex; flex-direction: column; padding: 3px 2px 0; border-right: 2px solid #f4f4f4; background: #ccd8f0; border-top: 1px solid #fff; border-left: 1px solid #fff; }
.ltools { height: 28px; display: flex; align-items: center; padding-left: 3px; }
.ltools button { width: 23px; display: flex; justify-content: center; }
.sep { width: 2px; height: 20px; flex: none; margin: 0 2px; background: #a0a0a0; border-right: 1px solid #fff; }
.ltools .showall { width: auto; height: 25px; align-items: center; gap: 1px; padding: 0 5px 0 6px; background: #d9e1f2; border: 1px solid #fff; border-top-color: #a0a0a0; border-left-color: #a0a0a0; }
.lib { height: 24px; display: flex; border: 1px solid #8090a8; }
.lib input { flex: 1; min-width: 0; border: 0; padding: 0 0 0 4px; background: #fff; font: 13px/20px Inter, "Noto Sans CJK SC", sans-serif; }
.lib button { padding: 0 5px; border-left: 1px solid #8090a8; }
.treebox { flex: 1; min-height: 0; display: flex; background: #fff; border-top: 1px solid #808080; border-left: 1px solid #a0a0a0; overflow: hidden; }
.tree { flex: 1; min-width: 0; margin: 0; padding: 0; list-style: none; overflow: hidden; font-family: Inter, "Noto Sans CJK SC", sans-serif; }
.tree li { display: flex; align-items: center; height: 23px; white-space: nowrap; }
.tree li > i { width: 19px; height: 23px; flex: none; display: flex; align-items: center; justify-content: center; background-repeat: no-repeat; }
.tree .v { background-image: repeating-linear-gradient(#a0a0a0 0 1px, transparent 1px 2px); background-size: 1px 100%; background-position: 9px 0; }
.tree .t, .tree .l { background-image: repeating-linear-gradient(#a0a0a0 0 1px, transparent 1px 2px), repeating-linear-gradient(90deg, #a0a0a0 0 1px, transparent 1px 2px); background-size: 1px 100%, 10px 1px; background-position: 9px 0, 9px 11px; }
.tree .l { background-size: 1px 12px, 10px 1px; }
.tree i button { width: 9px; height: 9px; background: linear-gradient(#000, #000) center / 5px 1px no-repeat #fff; border: 1px solid #909090; }
.g, .r { width: 14px; height: 14px; color: #006400; }
.r { color: #f00; }
.f { width: 16px; height: 16px; }
.tree .g, .tree .r { margin: 0 4px 0 1px; }
.tree .f { margin: 0 3px 0 0; }
.tree span { padding-left: 2px; height: 23px; line-height: 23px; overflow: hidden; }
.tree .sel { flex: 1; margin-left: -1px; background: #a0a0a4; border: 1px solid #606060; line-height: 21px; }
.vscroll { width: 17px; flex: none; display: flex; flex-direction: column; background: #f6f6f6; }
.vscroll button { height: 17px; display: flex; align-items: center; justify-content: center; background: #f0f0f0; border: 1px solid #fff; border-right-color: #909090; border-bottom-color: #909090; }
.vscroll svg { width: 7px; height: 4px; }
.vscroll .up svg { transform: rotate(180deg); }
.vscroll .thumb { height: 93px; margin: 76px 0 auto; background: #f0f0f0; border-right: 1px solid #909090; border-bottom: 1px solid #909090; }
.hsplit { height: 9px; flex: none; display: flex; align-items: center; justify-content: center; gap: 4px; }
.hsplit svg { width: 10px; height: 6px; }
.grip { width: 70px; height: 8px; border: 1px solid #8ea5cf; border-bottom: 0; border-radius: 3px 3px 0 0; background: linear-gradient(90deg, #8a98b8 2px, transparent 2px) 2px 3px / 5px 2px repeat-x #dde5f5; }
.examples { height: 98px; flex: none; background: #fff; border: 1px solid #808080; border-bottom: 0; font-family: Inter, "Noto Sans CJK SC", sans-serif; }
.exhead { height: 24px; display: flex; align-items: center; justify-content: center; gap: 32px; }
.exrow { height: 23px; display: flex; align-items: center; gap: 6px; padding-left: 1px; }

.vsplit { width: 13px; flex: none; display: flex; align-items: center; padding-top: 39px; border-right: 1px solid #808080; background: linear-gradient(90deg, #ccd8f0 0 9px, #a9bfe3 9px); }
.handle { width: 9px; height: 360px; display: flex; flex-direction: column; align-items: center; border: 1px solid #9aabca; border-left: 0; border-radius: 0 4px 4px 0; background: #dbe4f5; }
.handle span { flex: 1; width: 2px; background: linear-gradient(#8a98b8 2px, transparent 2px) 0 2px / 2px 5px; }
.handle svg { width: 6px; height: 18px; }

.right { flex: 1; min-width: 0; display: flex; flex-direction: column; padding-top: 4px; background: #ccd8f0; }
.bar { height: 30px; flex: none; display: flex; align-items: center; overflow: hidden; border-top: 1px solid #a0a0a0; border-bottom: 1px solid #fff; padding-left: 3px; }
.b1 .s16, .b2 .s16 { margin: auto; }
.b1 button { width: 26px; height: 26px; display: flex; align-items: center; justify-content: center; }
.b2 button { width: 25px; height: 24px; display: flex; align-items: center; justify-content: center; }
.bar .sep { margin: 0 1px; }
.bar > .sep:first-child { margin: 0 4px 0 1px; }
.b3.bar > .sep:first-child { margin-right: 9px; }
.bar .w8 { margin: 0 3px; }
.bar .press { width: 26px; background: #e4eaf6; border: 1px solid #fff; border-top-color: #a0a0a0; border-left-color: #a0a0a0; }
.ser { font-family: "Liberation Serif", serif; font-size: 16px; }
.ser.b { font-weight: bold; }
.ser.i { font-style: italic; }
.bar .red { line-height: 14px; }
.red::after { content: ""; position: absolute; width: 12px; height: 2px; margin-top: 16px; background: #f00; }
.sup sup { font-size: 9px; line-height: 8px; align-self: flex-start; padding-top: 6px; }
.b2 .sum { font-size: 18px; }
.circ span { width: 17px; height: 17px; border: 1px solid #000; border-radius: 50%; font: 9px/15px "Liberation Sans", sans-serif; }
.combo { display: flex; align-items: center; height: 25px; flex: none; background: #fff; border: 1px solid #a0a0a0; padding: 0 5px 0 3px; position: relative; }
.combo select { appearance: none; border: 0; background: none; padding: 0; flex: 1; min-width: 0; color: #000; font: 14px/20px "Noto Sans", "Noto Sans CJK SC", sans-serif; }
.combo.font select { font-size: 13px; }
.combo > svg:first-child { width: 12px; height: 12px; margin-right: 3px; }
.font { width: 92px; }
.size { width: 58px; }
.b2 .zoom { width: 68px; }
.b2 .line { width: 80px; padding-left: 5px; justify-content: space-between; }
.line span { width: 53px; height: 1px; background: #000; }
.combo.line select { position: absolute; inset: 0; width: 100%; }
.dn { width: 9px; height: 5px; }
.b2 .arr2 { width: 17px; }
.b3 { height: 28px; border-bottom: 0; }
.b3 button { width: 92px; display: flex; align-items: center; }
.b3 .wide { width: auto; }
.b3 .arr3 { width: 17px; }
.ic { width: 18px; height: 16px; line-height: 16px; text-align: center; }
.dig { font: 10px/16px "Liberation Sans", sans-serif; }
.dig sup, .dig sub { font-size: 9px; line-height: 0; }
.no { font-family: "Liberation Serif", serif; font-size: 12px; text-align: left; }

.sheet { flex: 1; min-height: 0; overflow: hidden; background: #f0f0f0; border-top: 2px solid #707070; }
table { table-layout: fixed; width: 743px; border-collapse: separate; border-spacing: 0; font: 13px/14px "Noto Sans CJK SC", sans-serif; }
.c5 { width: 5px; } .c17 { width: 17px; } .c20 { width: 20px; } .c22 { width: 22px; } .c25 { width: 25px; }
.c26 { width: 26px; } .c27 { width: 27px; } .c28 { width: 28px; } .c29 { width: 29px; } .c30 { width: 30px; } .c33 { width: 33px; }
.c35 { width: 35px; } .c38 { width: 38px; } .c51 { width: 51px; } .c61 { width: 61px; }
th, td { padding: 0; overflow: hidden; text-align: center; vertical-align: middle; }
th { font: 13px/13px "Liberation Serif", serif; background: #f0f0f0; border-right: 1px solid #a0a0a0; border-bottom: 1px solid #a0a0a0; box-shadow: inset 1px 1px #fff; }
thead th { height: 20px; padding-top: 1px; }
th.cur { font-weight: bold; border-right-color: #e4e4e4; }
.corner svg { width: 12px; height: 12px; margin: 4px 1px 0 auto; }
td { border-right: 1px solid #000; border-bottom: 1px solid #000; background: #fff; }
.n { font: 12px/12px "Liberation Mono", monospace; }
td.lab, td.ma, td.ml, td.mr { background: #e0e0e0; }
td.o { background: #f0c9a6; }
td.ma { border: 0; }
td.ml { border-bottom: 0; border-right: 2px solid #000; }
td.mr { border-bottom: 0; border-right: 1px solid #c4c4b8; border-left: 1px solid #000; }
td.thin { border-left-color: #e0e0e0; }
td.top { border-right: 0; border-bottom: 2px solid #000; background: #e0e0e0; }
td.h1 { font-size: 22px; line-height: 24px; border-bottom-color: #cfcfcb; }
td.h2 { font-size: 15px; line-height: 16px; padding-bottom: 10px; }
td.left1 { text-align: left; padding-left: 9px; border-bottom-color: #606060; }
td.soft { border-bottom-color: #cfcfc8; }
td.blank { border-color: #606060; }
.h4 { height: 4px; } .h30 { height: 30px; } .h35 { height: 35px; } .h41 { height: 41px; }
.h45 { height: 45px; } .h56 { height: 56px; } .h70 { height: 70px; }
```
